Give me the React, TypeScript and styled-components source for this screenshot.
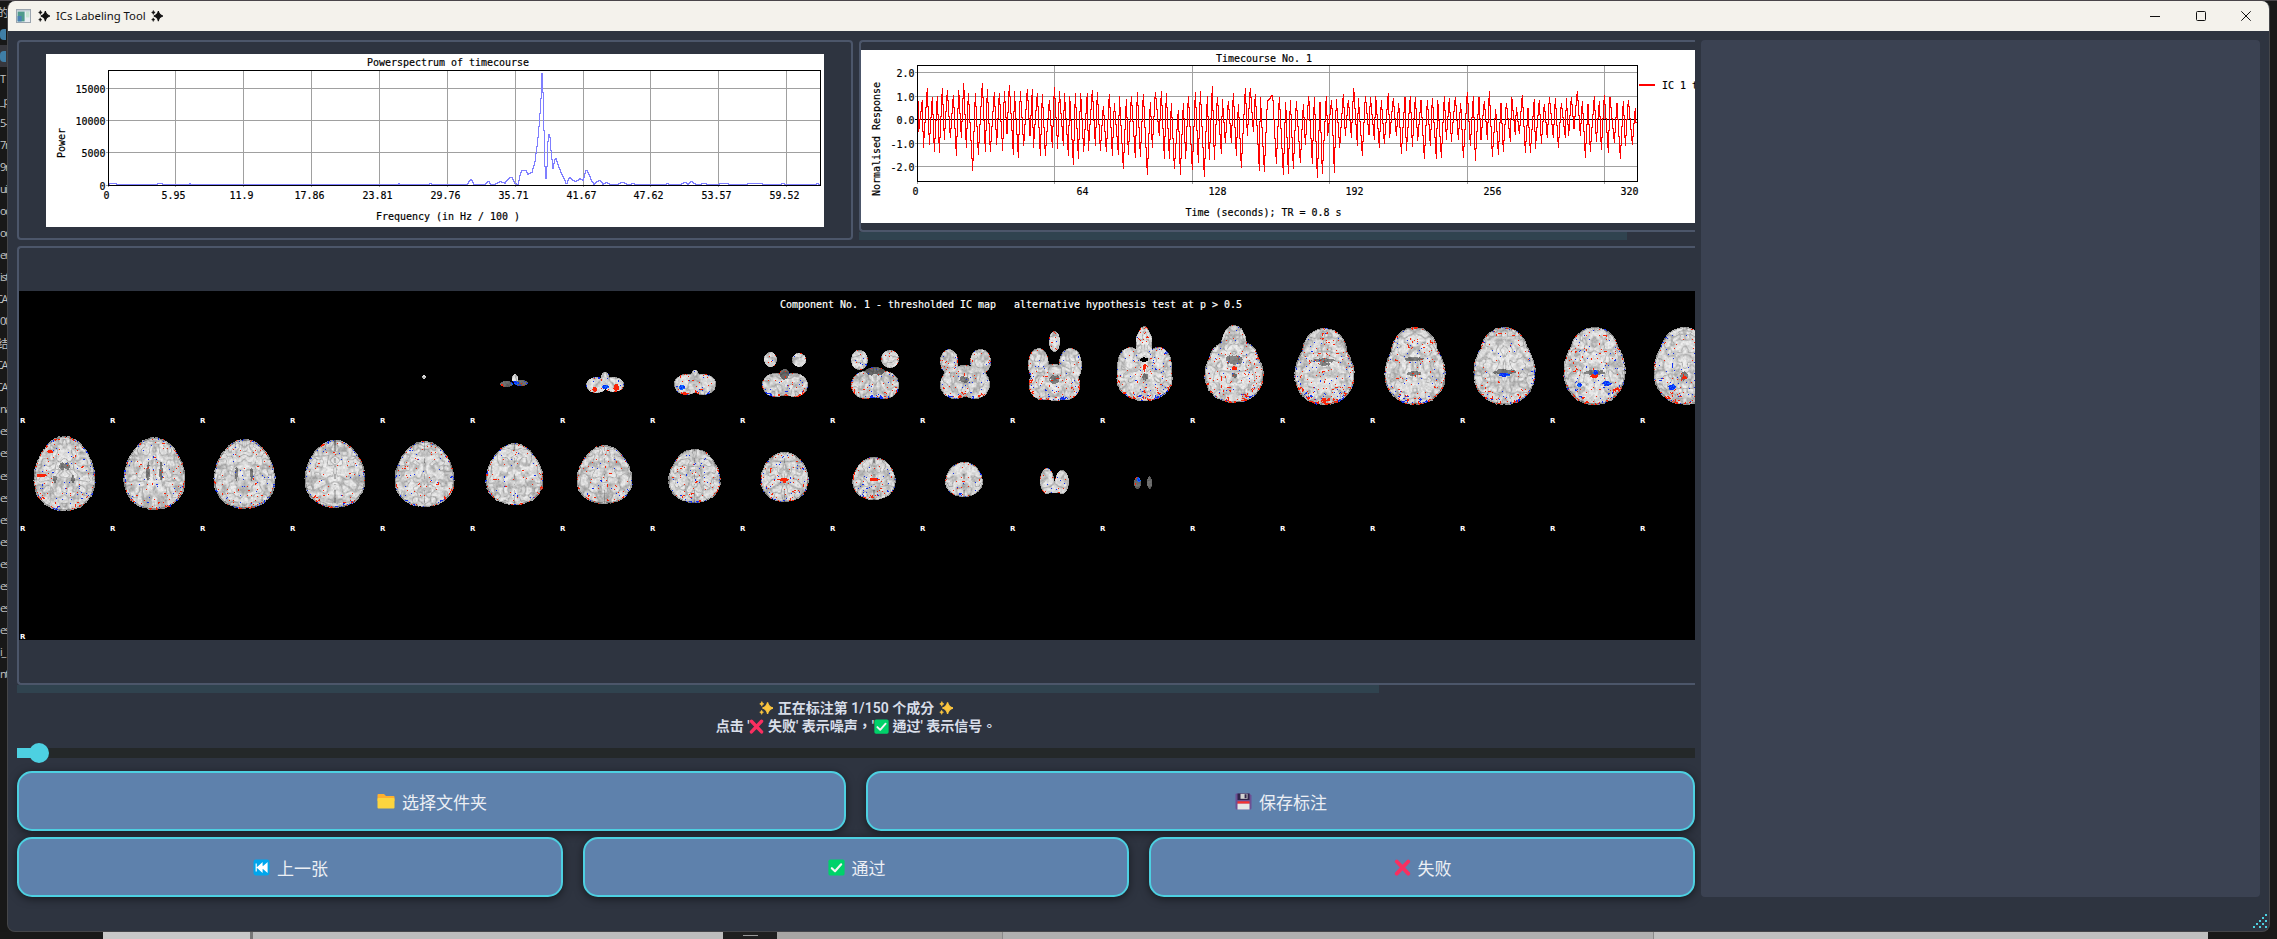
import React, { useMemo } from "react";
import styled, { createGlobalStyle } from "styled-components";

const GlobalStyle = createGlobalStyle`
  * { box-sizing: border-box; }
  body { margin: 0; background: #191919; overflow: hidden; }
`;

const uiFont = `"Open Sans", "Noto Sans CJK SC", sans-serif`;

const Desktop = styled.div`
  width: 2277px;
  height: 939px;
  display: flex;
  flex-direction: column;
  background: #191919;
  overflow: hidden;
  font-family: ${uiFont};
`;

const Upper = styled.div`
  display: flex;
  height: 932px;
  border-top: 1px solid #49454a;
`;

const EditorSliver = styled.div`
  width: 7px;
  height: 931px;
  overflow: hidden;
  background: #181818;
  display: flex;
  flex-direction: column;
`;

const SliverLine = styled.div<{ $active?: boolean; $end?: boolean }>`
  height: 22.05px;
  flex: none;
  display: flex;
  align-items: center;
  justify-content: ${(p) => (p.$end ? "flex-end" : "flex-start")};
  font-size: 11px;
  letter-spacing: -1.4px;
  white-space: nowrap;
  color: #c4c4c4;
  background: ${(p) => (p.$active ? "#37373d" : "transparent")};
`;

const SliverDot = styled.span`
  width: 6px;
  height: 11px;
  flex: none;
  border-radius: 4px 0 0 4px;
  background: #3f7ea6;
`;

const Window = styled.div`
  width: 2263px;
  height: 931px;
  border: 1px solid #45464a;
  border-top: none;
  border-radius: 8px;
  overflow: hidden;
  background: #2e3440;
  display: flex;
  flex-direction: column;
  position: relative;
`;

const TitleBar = styled.div`
  height: 30px;
  flex: none;
  background: #f4f2ec;
  display: flex;
  align-items: center;
  padding-left: 8px;
`;

const TitleText = styled.span`
  font-family: "Noto Sans", sans-serif;
  font-size: 11.3px;
  line-height: 30px;
  color: #111;
  width: 89px;
  margin: 0 6px;
  white-space: nowrap;
`;

const IconGap = styled.span`
  width: 7px;
`;

const WindowControls = styled.div`
  margin-left: auto;
  display: flex;
  align-items: center;
  gap: 35.5px;
  padding-right: 18px;
`;

const Body = styled.div`
  display: flex;
  gap: 6px;
  padding: 9px 8px 0 9px;
`;

const MainColumn = styled.div`
  width: 1678px;
  height: 857px;
  display: flex;
  flex-direction: column;
  > * { flex-shrink: 0; }
`;

const SidePanel = styled.div`
  width: 559px;
  height: 857px;
  background: #3b4252;
  border-radius: 4px;
`;

const ChartRow = styled.div`
  display: flex;
  gap: 6px;
  height: 200px;
  margin-bottom: 6px;
`;

const ChartColumn = styled.div<{ $w: number }>`
  width: ${(p) => p.$w}px;
  display: flex;
  flex-direction: column;
`;

const Frame = styled.div<{ $h: number; $cut?: boolean; $top: number }>`
  height: ${(p) => p.$h}px;
  flex: none;
  border: 2px solid #4c566a;
  border-right-width: ${(p) => (p.$cut ? 0 : 2)}px;
  border-radius: ${(p) => (p.$cut ? "4px 0 0 4px" : "4px")};
  padding-top: ${(p) => p.$top}px;
  display: flex;
  justify-content: ${(p) => (p.$cut ? "flex-start" : "center")};
  overflow: hidden;
`;

const ScrollThumb = styled.div<{ $w: number }>`
  height: 8px;
  width: ${(p) => p.$w}px;
  background: #30434f;
`;

const Plot = styled.svg`
  display: block;
  flex: none;
  text {
    font-family: "DejaVu Sans Mono", monospace;
    font-size: 11px;
    white-space: pre;
  }
`;

const Status = styled.div`
  height: 50px;
  padding: 6px 0 0 0;
  display: flex;
  flex-direction: column;
  align-items: center;
  font-family: Roboto, "Noto Sans CJK TC", sans-serif;
  font-weight: 600;
  font-size: 14px;
  color: #d8dee9;
`;

const StatusLine = styled.div<{ $gap: number }>`
  height: 18px;
  display: flex;
  gap: ${(p) => p.$gap}px;
  align-items: center;
  white-space: pre;
  line-height: 18px;
`;

const Slider = styled.div`
  height: 20px;
  display: flex;
  align-items: center;
  margin-bottom: 8px;
`;

const SliderFill = styled.div`
  width: 16px;
  height: 10px;
  background: #4dd0e1;
`;

const SliderHandle = styled.div`
  width: 20px;
  height: 20px;
  margin: 0 -4px;
  border-radius: 50%;
  background: #4dd0e1;
  z-index: 1;
`;

const SliderTrack = styled.div`
  flex: 1;
  height: 10px;
  background: #242829;
`;

const ButtonRow = styled.div`
  display: flex;
  gap: 20px;
  & + & { margin-top: 6px; }
`;

const ActionButton = styled.button`
  flex: 1;
  height: 60px;
  padding: 0 0 0 1px;
  border: 2px solid #4dd0e1;
  border-radius: 15px;
  background: #5e81ac;
  box-shadow: 0 2px 9px rgba(0, 0, 0, 0.5);
  color: #eceff4;
  font-family: "Noto Sans CJK SC", sans-serif;
  font-size: 17px;
  display: flex;
  align-items: center;
  justify-content: center;
  gap: 7px;
`;

const Grip = styled.svg`
  position: absolute;
  right: 2px;
  bottom: 3px;
`;

const Below = styled.div`
  height: 7px;
  display: flex;
  padding-left: 103px;
`;

const BelowPart = styled.div<{ $w: number; $c: string }>`
  width: ${(p) => p.$w}px;
  background: ${(p) => p.$c};
`;

const TaskHandle = styled(BelowPart)`
  display: flex;
  justify-content: center;
  align-items: center;
  &::after {
    content: "";
    width: 15px;
    height: 1px;
    background: #9a9a9a;
  }
`;

/* ---------- icons ---------- */

const Sparkles = ({ size, color }: { size: number; color: string }) => (
  <svg width={size} height={size} viewBox="0 0 16 16" fill={color}>
    <path d="M9.8 1.6 Q10.6 6.8 16 8 Q10.6 9.3 9.8 14.8 Q9 9.3 3.8 8 Q9 6.8 9.8 1.6Z" stroke={color} strokeWidth="1.4" />
    <path d="M3.2 .6 Q3.5 2.9 5.6 3.3 Q3.5 3.7 3.2 6 Q2.9 3.7 .8 3.3 Q2.9 2.9 3.2 .6Z" stroke={color} strokeWidth=".7" />
    <path d="M3 10.4 Q3.3 12.4 5.2 12.8 Q3.3 13.2 3 15.4 Q2.7 13.2 .8 12.8 Q2.7 12.4 3 10.4Z" stroke={color} strokeWidth=".6" />
  </svg>
);

const Cross = ({ size }: { size: number }) => (
  <svg width={size} height={size} viewBox="0 0 16 16">
    <path d="M2.6 2.4 13.4 13.8 M13.4 2.4 2.6 13.8" stroke="#f92f60" strokeWidth="3.6" strokeLinecap="round" />
  </svg>
);

const Check = ({ size }: { size: number }) => (
  <svg width={size} height={size} viewBox="0 0 16 16">
    <rect x=".4" y=".4" width="15.2" height="15.2" rx="1.8" fill="#00d26a" />
    <path d="M3.6 8.6 6.6 11.6 12.4 5" fill="none" stroke="#f4f4f4" strokeWidth="2" strokeLinecap="round" strokeLinejoin="round" />
  </svg>
);

const Folder = () => (
  <svg width="18" height="16" viewBox="0 0 18 16">
    <path d="M.5 2 Q.5 1 1.5 1 H7 L9 3 H16.5 Q17.5 3 17.5 4 V8 H.5Z" fill="#ffb02e" />
    <rect x=".5" y="5" width="17" height="10.6" rx="1" fill="#fcd53f" />
  </svg>
);

const Floppy = () => (
  <svg width="17" height="17" viewBox="0 0 17 17">
    <path d="M1.5 .5 H14.5 L16.5 2.5 V15 Q16.5 16.5 15 16.5 H2 Q.5 16.5 .5 15 V1.5 Q.5 .5 1.5 .5Z" fill="#6d4f93" />
    <rect x="2.5" y=".5" width="12" height="6.5" fill="#31254a" />
    <rect x="5.5" y=".8" width="7" height="5" fill="#d3d3d3" />
    <rect x="9.6" y="1.2" width="2" height="4" fill="#31254a" />
    <rect x="2.5" y="8.3" width="12" height="2.4" fill="#f8312f" />
    <rect x="2.5" y="10.7" width="12" height="5.8" fill="#e6e6e6" />
  </svg>
);

const Previous = () => (
  <svg width="17" height="17" viewBox="0 0 17 17">
    <rect x=".5" y=".5" width="16" height="16" rx="2.4" fill="#00a6ed" />
    <path d="M3.2 4.5 V12.5 M9 4.4 L4.4 8.5 L9 12.6Z M14 4.4 L9.2 8.5 L14 12.6Z" fill="#fff" stroke="#fff" strokeWidth="1.2" />
  </svg>
);

const AppIcon = () => (
  <svg width="15" height="14" viewBox="0 0 15 14">
    <rect x=".5" y=".5" width="14" height="13" fill="#e9edf2" stroke="#9aa4ae" />
    <rect x="1.6" y="2.4" width="7" height="10" fill="#4f9a8c" />
    <rect x="1.6" y="7" width="4" height="5.4" fill="#4a7fb5" />
    <rect x="10" y="2.4" width="3.4" height="6" fill="#c9e4d4" />
    <rect x="1" y="1" width="13" height="1.4" fill="#c3ccd6" />
  </svg>
);

/* ---------- charts ---------- */

type LabelProps = { x: number; y: number; children: string; anchor?: "start" | "middle" | "end"; fill?: string; rotate?: boolean };

const Label = ({ x, y, children, anchor = "start", fill = "#000", rotate }: LabelProps) => (
  <text
    x={x}
    y={y}
    fill={fill}
    stroke={fill}
    strokeWidth={0.2}
    textAnchor={anchor}
    textLength={children.length * 6}
    lengthAdjust="spacingAndGlyphs"
    transform={rotate ? `rotate(-90 ${x} ${y})` : undefined}
  >
    {children}
  </text>
);

const powerTicks = ["0", "5.95", "11.9", "17.86", "23.81", "29.76", "35.71", "41.67", "47.62", "53.57", "59.52"];
const powerGrid = [108.5, 175.5, 243.5, 311.5, 379.5, 447.5, 515.5, 583.5, 650.5, 718.5, 786.5];
const powerLine =
  "109,184 111,182.5 115,182.5 117,184 156,184 158,183.2 162,183.2 164,184 188,184 190,183 192,184 397,184 399,183 401,184 428,184 430,183 433,184 467,184 469,181 471.5,178.5 474,183.5 485,184 488.5,180.5 491,184 495,183.5 500,181 505,182.5 508,178.5 511.5,176.5 515,182.5 518,184 520,175 522,169.5 526,170 528,173.5 532,172 535,161 537.5,142 539.5,120 541,98 542,73 543,92 544,130 545.5,184 547,166 548,141 549.5,131 551,150 553,168 555.5,156.5 559,167 562,174 564,178 566.5,184 569.5,176.5 572,179 576,181 580,178 583,180 586.5,168.5 589,174 591.5,180 594,184 597,181 600.5,180 603,184 606.5,181.5 610,184 618,183.5 623,181.5 628,184 633,183.2 637,184 665,184 667,183.2 670,184 681,184 685,181.5 688,184 691.5,181 696,184 705,183.2 709,184 725,183.2 735,184 755,183.2 763,183.5 780,184 783,183.2 787,184 815,184 817,183 820,184";

/* resamples a line to one value per pixel column and joins them by vertical runs */
const toSteps = (pts: number[][], keepExtremes: boolean) => {
  const out: string[] = [];
  let seg = 0;
  let prev = pts[0][1];
  const from = Math.ceil(pts[0][0]);
  const to = Math.floor(pts[pts.length - 1][0]);
  for (let x = from; x <= to; x++) {
    while (seg < pts.length - 2 && pts[seg + 1][0] < x) {
      seg++;
      if (keepExtremes) out.push(`L${x - 0.5} ${Math.round(pts[seg][1]) + 0.5}`);
    }
    const [x0, y0] = pts[seg];
    const [x1, y1] = pts[seg + 1];
    const t = x1 === x0 ? 1 : Math.min(1, Math.max(0, (x - x0) / (x1 - x0)));
    const y = Math.round(y0 + (y1 - y0) * t);
    out.push(`L${x - 0.5} ${y + 0.5}L${x + 0.5} ${y + 0.5}`);
    prev = y;
  }
  return `M${from - 0.5} ${Math.round(pts[0][1]) + 0.5}${out.join("")}L${to + 0.5} ${prev + 0.5}`;
};

const powerPath = toSteps(powerLine.split(" ").map((p) => p.split(",").map(Number)), false);

const PowerSpectrum = () => (
  <Plot width="778" height="173" viewBox="46 54 778 173">
    <rect x="46" y="54" width="778" height="173" fill="#fff" />
    {powerGrid.map((x) => (
      <path key={x} d={`M${x} 70V187`} stroke="#a0a0a0" />
    ))}
    {[88.5, 120.5, 152.5, 185.5].map((y) => (
      <path key={y} d={`M106 ${y}H820`} stroke="#a0a0a0" />
    ))}
    <path d={powerPath} fill="none" stroke="#7f7fff" shapeRendering="crispEdges" />
    <rect x="108.5" y="70.5" width="712" height="115" fill="none" stroke="#000" />
    <Label x={367} y={65.5}>Powerspectrum of timecourse</Label>
    <Label x={376} y={220}>Frequency (in Hz / 100 )</Label>
    <Label x={65} y={158} rotate>Power</Label>
    {["15000", "10000", "5000", "0"].map((t, i) => (
      <Label key={t} x={105.5} y={[93, 125, 157, 190][i]} anchor="end">{t}</Label>
    ))}
    {powerTicks.map((t, i) => (
      <Label key={t} x={powerGrid[i] - 2} y={199} anchor="middle">{t}</Label>
    ))}
  </Plot>
);

/* alternating peaks and troughs, in thirds of a pixel from each block's origin */
const waveA =
  "52,223 55,165 56,257 67,163 70,305 82,126 88,296 97,153 103,317 112,150 118,320 127,126 133,281 142,132 151,277 160,147 169,329 176,132 184,275 191,111 199,305 205,141 218,374 226,141 235,326 247,111 256,317 262,129 271,317 283,138 290,296 298,141 308,314 313,135 321,265 328,117 340,326 343,135 355,335 361,135 371,299 382,129 390,271 397,129 400,305 412,141 421,329 427,144 436,329 448,162 457,305 463,123 473,308 478,135 490,299 493,141 505,329 509,150 520,356 526,141 535,338 542,141 551,317 562,141 565,314 577,132 586,299 592,138 601,314 610,181 619,317 628,144 637,329 643,171 655,326 658,150 670,368 679,159 685,326 694,150 706,335 712,138 721,332 730,144 742,386 751,168 757,305 766,138 778,271 784,135 793,338 799,141 808,338 814,171 823,368 835,192 841,386 850,171 857,338 865,150 877,371 886,138 895,350 901,135 913,392 922,150 928,341 937,120 943,341 952,153 964,323 967,159 976,290 985,165 994,290 1000,141 1009,329 1015,174 1024,365 1036,126 1042,269 1051,126 1060,259 1066,144 1078,374 1081,153 1093,377 1102,168 1114,317 1117,147 1129,353";
const waveB =
  "8,147 19,353 28,153 40,386 47,168 55,383 61,162 70,368 79,165 91,350 100,174 106,296 116,150 127,353 133,153 142,395 150,171 157,383 169,150 173,271 185,162 193,380 199,159 209,305 220,144 226,271 235,162 244,275 251,126 262,299 265,156 277,329 286,150 297,268 301,153 313,281 317,150 328,305 334,162 343,293 355,141 359,275 370,156 379,271 386,171 394,323 405,156 409,314 421,150 427,302 436,153 443,284 453,165 463,338 472,162 481,299 487,156 499,338 503,162 514,335 523,150 529,281 538,156 544,287 556,153 565,281 572,171 580,335 592,138 601,299 610,150 616,344 627,156 633,281 643,165 652,281 658,135 667,332 677,190 685,326 693,174 700,317 709,171 721,287 725,153 736,268 739,183 748,265 757,147 766,320 774,190 781,320 793,159 796,308 808,162 814,293 823,174 832,277 838,153 850,277 856,156 865,305 874,171 886,277 889,156 896,269 904,153 912,248 922,135 931,269 937,165 946,335 954,177 961,317 973,150 979,287 988,165 994,311 1003,147 1015,320 1020,156 1033,290 1041,174 1051,338 1060,165 1066,299 1075,162 1087,296 1096,186 1100,277";

const parseWave = (s: string, ox: number): number[][] =>
  s.split(" ").map((p) => {
    const [x, y] = p.split(",").map(Number);
    return [ox + x / 3, 45 + y / 3];
  });

const buildTimecourse = () => {
  const head = parseWave(waveA, 900).filter((p) => p[0] < 1270);
  const joint = [[1272.7, 94], [1276.3, 162.7], [1279.3, 96], [1283, 152], [1286, 96]];
  const tail = parseWave(waveB, 1270);
  const end = head[head.length - 1][0];
  const begin = tail[0][0];
  return toSteps([...head, ...joint.filter((p) => p[0] > end && p[0] < begin), ...tail], true);
};

const timeGrid = [917.5, 1054.5, 1192.5, 1329.5, 1467.5, 1604.5];
const timeTicks: [number, string][] = [[912.5, "0"], [1076.5, "64"], [1208.5, "128"], [1345.5, "192"], [1483.5, "256"], [1620.5, "320"]];

const Timecourse = () => {
  const line = useMemo(buildTimecourse, []);
  return (
    <Plot width="834" height="173" viewBox="861 50 834 173">
      <rect x="861" y="50" width="834" height="173" fill="#fff" />
      {timeGrid.map((x) => (
        <path key={x} d={`M${x} 66V184`} stroke="#a0a0a0" />
      ))}
      {[72.5, 96.5, 143.5, 166.5].map((y) => (
        <path key={y} d={`M915 ${y}H1637`} stroke="#a0a0a0" />
      ))}
      <path d="M915 119.5H1637" stroke="#000" />
      <path d={line} fill="none" stroke="#f00" shapeRendering="crispEdges" />
      <rect x="917.5" y="65.5" width="720" height="116" fill="none" stroke="#000" />
      <Label x={1216} y={62}>Timecourse No. 1</Label>
      <Label x={1185.5} y={216}>Time (seconds); TR = 0.8 s</Label>
      <Label x={880} y={196} rotate>Normalised Response</Label>
      {["2.0", "1.0", "0.0", "-1.0", "-2.0"].map((t, i) => (
        <Label key={t} x={914.5} y={[77, 101, 124, 148, 171][i]} anchor="end">{t}</Label>
      ))}
      {timeTicks.map(([x, t]) => (
        <Label key={t} x={x} y={195.3}>{t}</Label>
      ))}
      <path d="M1639 85H1655" stroke="#f00" strokeWidth="2" />
      <Label x={1662} y={89}>IC 1 timecourse</Label>
    </Plot>
  );
};

/* ---------- slice mosaic ---------- */

/* lobe: left, right, top, bottom, taper towards the top, darkness */
type Lobe = [number, number, number, number, number?, number?];
type Slice = { lobes: Lobe[]; dark?: Lobe[]; hot?: number; red?: Lobe[]; blue?: Lobe[]; fissure?: boolean; holes?: Lobe[] };

const slices: Slice[] = [
  { lobes: [[422, 426, 375, 379]] },
  { lobes: [[512, 518, 374, 383], [500, 513, 381, 387, 0, 1], [514, 528, 380, 386, 0, 1]], blue: [[511, 519, 381, 385]], hot: 2 },
  { lobes: [[601, 609, 372, 382], [586, 607, 377, 393], [603, 624, 377, 392]], blue: [[602, 609, 385, 389]], red: [[592, 597, 387, 392], [613, 620, 384, 391]], hot: 2 },
  { lobes: [[691, 699, 370, 382], [674, 699, 374, 395], [691, 716, 374, 395]], blue: [[679, 686, 385, 390]], red: [[680, 690, 392, 395]], hot: 2 },
  { lobes: [[764, 777, 352, 367], [792, 806, 353, 367], [762, 790, 373, 397], [780, 808, 373, 397], [766, 804, 373, 396], [779, 790, 369, 384, 0, 1]], hot: 2 },
  { lobes: [[851, 868, 350, 370], [881, 899, 350, 368], [851, 880, 371, 399], [870, 899, 371, 399], [855, 895, 371, 398], [865, 885, 367, 378, 0, 1], [870, 880, 371, 380]], hot: 1.8 },
  { lobes: [[940, 958, 349, 374], [970, 991, 349, 374], [940, 971, 369, 399], [959, 990, 369, 399], [945, 985, 365, 397]], dark: [[959, 969, 376, 383]], hot: 1.7 },
  { lobes: [[1028, 1049, 348, 382], [1059, 1082, 348, 382], [1049, 1060, 331, 352], [1029, 1080, 364, 401], [1029, 1056, 372, 400], [1053, 1080, 372, 400]], dark: [[1049, 1060, 375, 384]], hot: 1.9 },
  { lobes: [[1116, 1173, 352, 401, 0.05], [1117, 1144, 347, 386], [1145, 1172, 347, 386], [1136, 1152, 326, 374], [1136, 1152, 330, 350]], holes: [[1140, 1149, 357, 362]], dark: [[1142, 1148, 373, 381]], red: [[1143, 1146, 363, 371]], hot: 1.9 },
  { lobes: [[1204, 1264, 342, 403, 0.08], [1210, 1258, 340, 375], [1221, 1247, 325, 368]], dark: [[1225, 1243, 355, 365], [1231, 1237, 373, 378]], red: [[1232, 1237, 366, 370]], hot: 1.6 },
  { lobes: [[1294, 1355, 338, 405, 0.1], [1302, 1347, 328, 378]], dark: [[1312, 1336, 358, 363], [1319, 1331, 362, 366]], hot: 2.2 },
  { lobes: [[1384, 1446, 336, 405, 0.1], [1391, 1438, 327, 380]], dark: [[1404, 1424, 357, 361], [1407, 1422, 371, 376]], hot: 1.3 },
  { lobes: [[1473, 1536, 333, 405, 0.1], [1480, 1528, 327, 380]], dark: [[1493, 1516, 369, 375]], blue: [[1498, 1510, 373, 377]], hot: 1.1 },
  { lobes: [[1563, 1626, 332, 405, 0.08], [1570, 1619, 327, 380]], dark: [[1584, 1606, 370, 375]], blue: [[1593, 1598, 370, 375], [1577, 1582, 383, 387], [1602, 1612, 381, 386]], red: [[1590, 1599, 374, 378]], hot: 1.2 },
  { lobes: [[1653, 1717, 332, 405, 0.08], [1660, 1709, 327, 380]], dark: [[1680, 1688, 371, 381]], blue: [[1668, 1676, 384, 390]], red: [[1682, 1687, 376, 380]], hot: 1.1 },
  { lobes: [[33, 96, 436, 511, 0.16]], dark: [[59, 65, 462, 470], [64, 70, 462, 470], [53, 57, 475, 483], [71, 75, 475, 483]], red: [[36, 47, 474, 477], [47, 54, 450, 453]], hot: 0.7 },
  { lobes: [[123, 186, 437, 510, 0.16]], dark: [[146, 150, 462, 481], [159, 163, 462, 481]], hot: 0.7 },
  { lobes: [[213, 276, 439, 509, 0.15]], dark: [[235, 238, 466, 481], [250, 253, 466, 481]], hot: 0.6 },
  { lobes: [[304, 366, 440, 508, 0.15]], hot: 0.5, fissure: true },
  { lobes: [[394, 455, 441, 507, 0.17], [406, 443, 480, 507]], hot: 0.4, fissure: true },
  { lobes: [[485, 544, 443, 505, 0.2], [498, 531, 480, 505]], hot: 0.4, fissure: true },
  { lobes: [[576, 633, 445, 504, 0.2]], hot: 0.6, fissure: true },
  { lobes: [[668, 721, 449, 503, 0.16], [676, 713, 449, 480]], hot: 0.8, fissure: true },
  { lobes: [[760, 809, 452, 502, 0.12], [766, 803, 475, 502]], hot: 1.3, fissure: true, red: [[778, 790, 478, 481], [782, 787, 478, 483]] },
  { lobes: [[852, 896, 457, 500, 0.12], [859, 890, 475, 500]], hot: 1.2, fissure: true, red: [[868, 881, 478, 481]] },
  { lobes: [[945, 983, 462, 497, 0.1]], hot: 1.1, fissure: true },
  { lobes: [[1040, 1054, 468, 494], [1055, 1069, 470, 494], [1043, 1066, 481, 493]], hot: 1 },
  { lobes: [[1134, 1141, 477, 489, 0, 1], [1147, 1152, 476, 489, 0, 1]], blue: [[1137, 1141, 477, 482]], hot: 0.5 },
];

const hash = (x: number, y: number, s: number) => {
  let h = (Math.imul(x, 374761393) + Math.imul(y, 668265263) + Math.imul(s, 982451653)) | 0;
  h = Math.imul(h ^ (h >>> 13), 1274126177);
  h = Math.imul(h ^ (h >>> 15), 2246822519);
  return ((h ^ (h >>> 16)) >>> 0) / 4294967296;
};

const smooth = (x: number, y: number, s: number) => {
  const xi = Math.floor(x);
  const yi = Math.floor(y);
  const fx = x - xi;
  const fy = y - yi;
  const u = fx * fx * (3 - 2 * fx);
  const v = fy * fy * (3 - 2 * fy);
  const a = hash(xi, yi, s) * (1 - u) + hash(xi + 1, yi, s) * u;
  const b = hash(xi, yi + 1, s) * (1 - u) + hash(xi + 1, yi + 1, s) * u;
  return a * (1 - v) + b * v;
};

const depth = (x: number, y: number, [l, r, t, b, k = 0]: Lobe) => {
  const ty = (y - (t + b) / 2) / ((b - t) / 2);
  if (Math.abs(ty) >= 1) return -1;
  const half = ((r - l) / 2) * (1 + k * (ty - 0.2));
  const tx = (x - (l + r) / 2) / half;
  return 1 - Math.pow(Math.abs(tx), 2.05) - Math.pow(Math.abs(ty), 2.05);
};

/* soft-edged marks, broken up so they do not read as clean ellipses */
const inAny = (x: number, y: number, list?: Lobe[]) =>
  !!list && list.some((o) => depth(x, y, o) > (smooth(x / 1.3, y / 1.3, 40) - 0.35) * 0.9);

const pixelColor = (s: Slice, n: number, x: number, y: number, mid: number, bottom: number, top: number): string | null => {
  const px = x + 0.5;
  const py = y + 0.5;
  let d = -1;
  let dim = false;
  s.lobes.forEach((o) => {
    const v = depth(px, py, o);
    if (v > d) {
      d = v;
      dim = !!o[5];
    }
  });
  if (d <= smooth(x / 2, y / 2, 5) * 0.07 - 0.03) return null;
  if (inAny(px, py, s.holes)) return null;
  if (inAny(px, py, s.blue)) return hash(x, y, 3) > 0.35 ? "#0c2cf4" : "#0e6cff";
  if (inAny(px, py, s.red)) return "#fa2408";
  const hot = s.hot || 0;
  const low = Math.max(0, (py - top) / (bottom - top) - 0.6);
  const rim = d < 0.12;
  /* activations gather in small clusters */
  const cluster = smooth(x / 2.2, y / 1.8, 60 + n);
  const limit = 0.925 - (rim ? 0.13 : 0) - low * 0.4 * Math.min(hot, 2.2) * (d < 0.4 ? 1 : 0.25) - hot * 0.01;
  if (cluster > limit && hash(x, y, 12) < 0.75) {
    return smooth(x / 5, y / 5, 21 + n) > 0.36 ? "#fa2408" : "#1230f0";
  }
  const p = 0.004 + hot * 0.009 + (rim ? 0.06 : 0);
  if (hash(x, y, 14) < p) return hash(x, y, 15) > 0.45 ? "#fa2408" : "#1230f0";
  const mx = Math.abs(px - mid);
  const warp = (smooth(mx / 5, y / 5, 70 + n) - 0.5) * 5;
  const fold = Math.abs(2 * smooth((mx + warp) / 4.4 + n * 7, (y + warp) / 5.2, 2) - 1);
  const size = bottom - top;
  const core = Math.min(1, Math.max(0, d - 0.2) * 1.4) * (size > 60 ? 10 : 4);
  let g = 168 + Math.min(1, fold * 2.2) * 48 + core + (smooth(x / 1.7, y / 1.7, 4) - 0.5) * 36 + (hash(x, y, 8) - 0.5) * 6;
  if (d < 0.1) g -= 50;
  if (s.fissure && mx < 1 && smooth(1, y / 4, 6) > 0.3) g -= 45;
  if (dim) g = g * 0.5;
  if (inAny(px, py, s.dark)) g *= 0.58;
  const q = Math.max(40, Math.min(238, Math.round(g / 8) * 8));
  return `rgb(${q},${q},${q})`;
};

const buildMosaic = () => {
  const paths: Record<string, string[]> = {};
  slices.forEach((s, n) => {
    const l = Math.min(...s.lobes.map((o) => o[0])) - 3;
    const r = Math.max(...s.lobes.map((o) => o[1])) + 3;
    const t = Math.min(...s.lobes.map((o) => o[2]));
    const b = Math.max(...s.lobes.map((o) => o[3]));
    for (let y = t; y < b; y++) {
      let run: string | null = null;
      let start = l;
      for (let x = l; x <= r; x++) {
        const c = x < r ? pixelColor(s, n, x, y, (l + r) / 2, b, t) : null;
        if (c !== run) {
          if (run) (paths[run] = paths[run] || []).push(`M${start} ${y}.5h${x - start}`);
          run = c;
          start = x;
        }
      }
    }
  });
  return Object.entries(paths).map(([c, d]) => ({ c, d: d.join("") }));
};

const SideMark = styled.text`
  && {
    font-family: "DejaVu Sans", sans-serif;
    font-weight: bold;
    font-size: 7px;
    fill: #fff;
  }
`;

const Side = ({ x, y }: { x: number; y: number }) => (
  <SideMark x={x} y={y}>R</SideMark>
);

const cells = Array.from({ length: 19 }, (_, i) => 20 + i * 90);

const SliceMosaic = () => {
  const layers = useMemo(buildMosaic, []);
  return (
    <Plot width="1676" height="349" viewBox="19 291 1676 349">
      <rect x="19" y="291" width="1676" height="349" fill="#000" />
      {layers.map(({ c, d }) => (
        <path key={c} d={d} stroke={c} fill="none" shapeRendering="crispEdges" />
      ))}
      <Label x={780} y={308} fill="#fff">{"Component No. 1 - thresholded IC map   alternative hypothesis test at p > 0.5"}</Label>
      {cells.map((x) => (
        <React.Fragment key={x}>
          <Side x={x} y={423} />
          <Side x={x} y={531} />
        </React.Fragment>
      ))}
      <Side x={20} y={639} />
    </Plot>
  );
};

/* ---------- page ---------- */

const sliver = ["的", "•", "•", "T", "_p", "5-", "7r", "9r", "ui", "oc", "oc", "er", "ist", "CA", "00", "结", "CA", "CA", "na",
  "est", "est", "est", "est", "est", "est", "est", "est", "est", "est", "i_", "nt"];

const gripDots = [[12, 0], [9, 3], [6, 6], [12, 6], [3, 9], [9, 9], [0, 12], [6, 12], [12, 12]];

export default function App() {
  return (
    <Desktop>
      <GlobalStyle />
      <Upper>
        <EditorSliver>
          {sliver.map((t, i) => (
            <SliverLine key={i} $active={i === 2} $end={t === "CA" || t === "的" || t === "结"}>
              {t === "•" ? <SliverDot /> : t}
            </SliverLine>
          ))}
        </EditorSliver>
        <Window>
          <TitleBar>
            <AppIcon />
            <IconGap />
            <Sparkles size={12} color="#111" />
            <TitleText>ICs Labeling Tool</TitleText>
            <Sparkles size={12} color="#111" />
            <WindowControls>
              <svg width="10" height="10"><path d="M0 5.5H10" stroke="#111" /></svg>
              <svg width="10" height="10"><rect x=".5" y=".5" width="9" height="9" rx="1" fill="none" stroke="#111" /></svg>
              <svg width="10" height="10"><path d="M.3 .3 9.7 9.7M9.7 .3 .3 9.7" stroke="#111" /></svg>
            </WindowControls>
          </TitleBar>
          <Body>
            <MainColumn>
              <ChartRow>
                <ChartColumn $w={836}>
                  <Frame $h={200} $top={12}><PowerSpectrum /></Frame>
                </ChartColumn>
                <ChartColumn $w={836}>
                  <Frame $h={192} $top={8} $cut><Timecourse /></Frame>
                  <ScrollThumb $w={768} />
                </ChartColumn>
              </ChartRow>
              <Frame $h={439} $top={43} $cut><SliceMosaic /></Frame>
              <ScrollThumb $w={1362} />
              <Status>
                <StatusLine $gap={1}><Sparkles size={14} color="#fcc63f" />{" 正在标注第 1/150 个成分 "}<Sparkles size={14} color="#fcc63f" /></StatusLine>
                <StatusLine $gap={0}>{"点击 '"}<Cross size={15} />{" 失败' 表示噪声，'"}<Check size={15} />{" 通过' 表示信号。"}</StatusLine>
              </Status>
              <Slider><SliderFill /><SliderHandle /><SliderTrack /></Slider>
              <ButtonRow>
                <ActionButton><Folder />选择文件夹</ActionButton>
                <ActionButton><Floppy />保存标注</ActionButton>
              </ButtonRow>
              <ButtonRow>
                <ActionButton><Previous />上一张</ActionButton>
                <ActionButton><Check size={17} />通过</ActionButton>
                <ActionButton><Cross size={17} />失败</ActionButton>
              </ButtonRow>
            </MainColumn>
            <SidePanel />
          </Body>
          <Grip width="14" height="14">
            {gripDots.map(([x, y]) => (
              <rect key={`${x}-${y}`} x={x} y={y} width="2" height="2" fill="#4dd0e1" />
            ))}
          </Grip>
        </Window>
      </Upper>
      <Below>
        <BelowPart $w={147} $c="#c8c8c8" />
        <BelowPart $w={3} $c="#777" />
        <BelowPart $w={470} $c="#bdbdbd" />
        <TaskHandle $w={54} $c="#202020" />
        <BelowPart $w={225} $c="#a8a6a4" />
        <BelowPart $w={1} $c="#8a8a8a" />
        <BelowPart $w={650} $c="#b0b0b0" />
        <BelowPart $w={1} $c="#8a8a8a" />
        <BelowPart $w={554} $c="#c0c0c0" />
      </Below>
    </Desktop>
  );
}
